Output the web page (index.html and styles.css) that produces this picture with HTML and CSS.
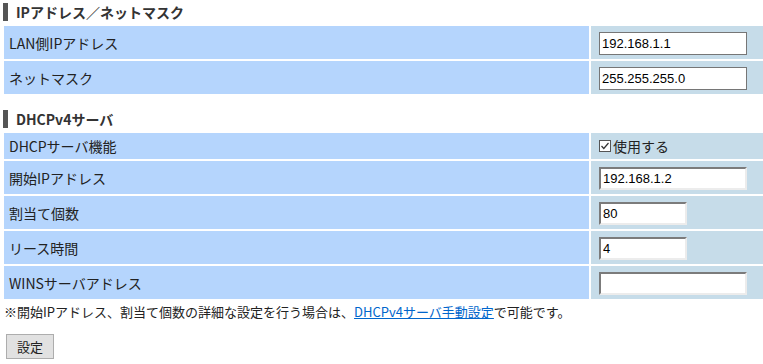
FILE: index.html
```html
<!DOCTYPE html>
<html lang="ja">
<head>
<meta charset="utf-8">
<title>IPアドレス／ネットマスク</title>
<link rel="stylesheet" href="styles.css">
</head>
<body>
<section class="sec">
  <h2 class="sec-title">IPアドレス／ネットマスク</h2>
  <div class="form-grid">
    <div class="lbl">LAN側IPアドレス</div>
    <div class="val"><input class="txt wide flat" type="text" value="192.168.1.1"></div>
    <div class="lbl">ネットマスク</div>
    <div class="val"><input class="txt wide flat" type="text" value="255.255.255.0"></div>
  </div>
</section>
<section class="sec sec-2">
  <h2 class="sec-title">DHCPv4サーバ</h2>
  <div class="form-grid">
    <div class="lbl short">DHCPサーバ機能</div>
    <div class="val short">
      <label class="chk">
        <svg class="chk-box" width="12" height="12" viewBox="0 0 12 12"><rect x="0.5" y="0.5" width="11" height="11" fill="#fff" stroke="#555"/><path d="M2.5 6 L4.8 8.5 L9.5 3" fill="none" stroke="#333" stroke-width="1.2"/></svg>
        <span>使用する</span>
      </label>
    </div>
    <div class="lbl">開始IPアドレス</div>
    <div class="val"><input class="txt wide inset" type="text" value="192.168.1.2"></div>
    <div class="lbl">割当て個数</div>
    <div class="val"><input class="txt narrow inset" type="text" value="80"></div>
    <div class="lbl">リース時間</div>
    <div class="val"><input class="txt narrow inset" type="text" value="4"></div>
    <div class="lbl">WINSサーバアドレス</div>
    <div class="val"><input class="txt wide inset" type="text" value=""></div>
  </div>
</section>
<p class="note">※開始IPアドレス、割当て個数の詳細な設定を行う場合は、<a href="#" class="link">DHCPv4サーバ手動設定</a>で可能です。</p>
<div class="actions"><button class="btn" type="button">設定</button></div>
</body>
</html>
```
FILE: styles.css
```css
html, body {
  margin: 0;
  padding: 0;
  background: #fff;
}
body {
  font-family: "Noto Sans CJK JP", "Noto Sans", sans-serif;
  font-size: 14px;
  color: #222;
  width: 763px;
  overflow: hidden;
}
.sec-title {
  margin: 3px 0 5px 3px;
  height: 18px;
  line-height: 18px;
  border-left: 5px solid #555;
  padding-left: 8px;
  font-size: 14px;
  font-weight: bold;
  color: #333;
}
.sec-2 .sec-title {
  margin-top: 16px;
}
.form-grid {
  margin-left: 4px;
  display: grid;
  grid-template-columns: 585px 1fr;
  column-gap: 2px;
  row-gap: 2px;
}
.lbl {
  background: #b5d5fd;
  height: 33px;
  display: flex;
  align-items: center;
  padding-left: 5px;
  line-height: 1;
}
.val {
  background: #c6dce9;
  height: 33px;
  display: flex;
  align-items: center;
  padding-left: 8px;
}
.lbl.short, .val.short {
  height: 26px;
}
.txt {
  box-sizing: border-box;
  height: 23px;
  margin: 1px 0 0 0;
  padding: 0 2px;
  font-family: "Liberation Sans", Arial, sans-serif;
  font-size: 13px;
  color: #000;
  background: #fff;
  border-radius: 0;
  outline: none;
}
.wide { width: 148px; }
.narrow { width: 88px; }
.flat {
  border: 1px solid #767676;
}
.inset {
  border-style: solid;
  border-width: 2px;
  border-color: #7b7b7b #ececec #ececec #7b7b7b;
}
.chk {
  display: flex;
  align-items: center;
  gap: 2px;
  font-size: 14px;
  color: #222;
}
.chk-box {
  display: block;
}
.note {
  margin: 4px 0 0 4px;
  line-height: 18px;
  font-size: 13px;
  color: #222;
}
.link {
  color: #0066cc;
  text-decoration: underline;
}
.actions {
  margin: 13px 0 0 6px;
}
.btn {
  width: 48px;
  height: 25px;
  padding: 0;
  font-family: "Noto Sans CJK JP", sans-serif;
  font-size: 13px;
  color: #222;
  background: #e1e1e1;
  border: 1px solid #adadad;
  border-radius: 0;
}
```
